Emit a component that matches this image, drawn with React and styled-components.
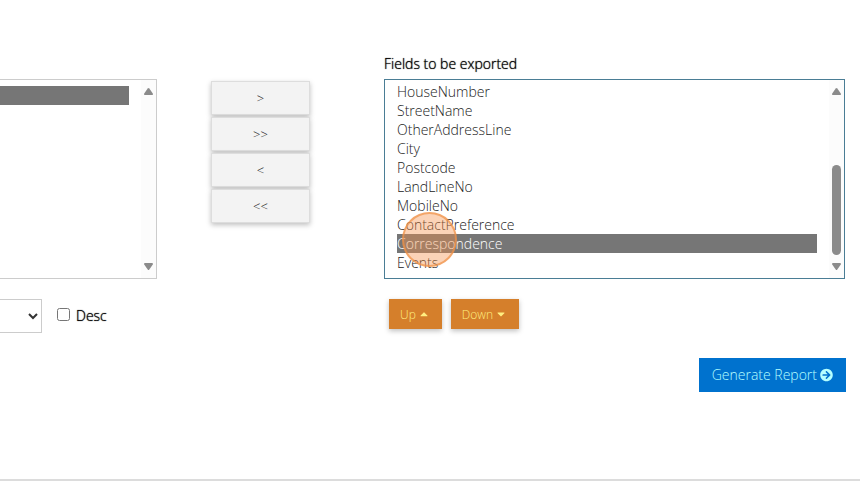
import React from 'react';
import styled, { createGlobalStyle } from "styled-components";
import { FaArrowCircleRight, FaCaretDown, FaCaretUp } from "react-icons/fa";

const GlobalStyle = createGlobalStyle`
* {
  box-sizing: border-box;
}

body {
  margin: 0;
  background: #fff;
  color: #555;
  font: 300 14px "Open Sans", "Noto Sans", sans-serif;
}

button, select, input {
  font: inherit;
}
`;

const Page = styled.main`
display: flex;
flex-direction: column;
padding-top: 54px;
border-bottom: 2px solid #dcdcdc;
`;

const Columns = styled.div`
display: grid;
grid-template-columns: 157fr 227fr 461fr;
padding-right: 15px;
`;

const Column = styled.div`
display: flex;
flex-direction: column;
min-width: 0;
`;

const Title = styled.label`
height: 25px;
line-height: 20px;
color: #000;
text-shadow: 0 0 1px #000;
`;

const ListFrame = styled.div`
position: relative;
display: flex;
height: 200px;
border: 1px solid ${({ $active }) => ($active ? "#4a7d95" : "#ccc")};
border-left-width: ${({ $active }) => ($active ? "1px" : "0")};
`;

const ListSelect = styled.select`
flex: 1;
min-width: 0;
padding: ${({ $scrolled }) => ($scrolled ? "2px 12px 6px" : "6px 12px 6px 0")};
border: 0;
outline: 0;
background: #fff;
color: #222;
overflow: hidden;
scrollbar-width: none;

option {
  min-height: 19px;
  padding: 0;
  font-weight: 300;
}

option:checked {
  background-image: linear-gradient(#767676, #767676);
  -webkit-text-fill-color: #fff;
}
`;

const Track = styled.div`
display: flex;
flex-direction: column;
align-items: center;
justify-content: space-between;
width: 15px;
padding: 8px 0;
background: #fcfcfc;
`;

const ScrollArrow = styled.svg`
display: block;
width: 9px;
height: 7px;
fill: #8b8b8b;
`;

const Thumb = styled.div`
width: 9px;
height: 90px;
margin: auto 0 8px;
border-radius: 5px;
background: #8b8b8b;
`;

const Transfer = styled.div`
display: flex;
flex-direction: column;
gap: 2px;
padding: 27px 0 0 54px;
`;

const TransferButton = styled.button`
width: 99px;
height: 34px;
border: 1px solid #ddd;
background: #f3f3f3;
color: #222;
font-size: 13px;
box-shadow: 0 2px 5px rgba(0, 0, 0, 0.25);
`;

const SortRow = styled.div`
display: flex;
align-items: center;
height: 34px;
margin-top: 20px;
white-space: nowrap;
`;

const SortSelect = styled.select`
width: 42px;
height: 34px;
border: 1px solid #ccc;
border-left: 0;
border-radius: 0;
background: #fff;
color: #333;
`;

const CheckLabel = styled.label`
display: flex;
align-items: center;
gap: 6px;
margin-left: 15px;
line-height: 18px;
color: #000;
text-shadow: 0 0 1px #000;

input {
  width: 13px;
  height: 13px;
  margin: 0 0 3px;
}
`;

const MoveRow = styled.div`
display: flex;
gap: 9px;
padding: 20px 5px 0;
`;

const MoveButton = styled.button`
display: flex;
align-items: center;
gap: 4px;
height: 30px;
padding: 0 14px 0 11px;
border: 0;
background: #d57f2b;
color: #ffee80;
font-size: 12px;
box-shadow: 0 2px 5px rgba(0, 0, 0, 0.25);

svg {
  width: 8px;
}
`;

const Footer = styled.div`
display: flex;
justify-content: flex-end;
padding: 25px 14px 87px;
`;

const GenerateButton = styled.button`
display: flex;
align-items: center;
gap: 3px;
height: 34px;
padding: 0 13px 1px;
border: 0;
background: #0072ce;
color: #b5ffff;

svg {
  width: 13px;
}
`;

const ClickMarker = styled.span`
position: absolute;
top: 132px;
left: 17px;
width: 55px;
height: 55px;
border: 2px solid rgba(240, 145, 70, 0.7);
border-radius: 50%;
background: rgba(245, 145, 75, 0.4);
pointer-events: none;
`;

const fields = [
    "HouseNumber",
    "StreetName",
    "OtherAddressLine",
    "City",
    "Postcode",
    "LandLineNo",
    "MobileNo",
    "ContactPreference",
    "Correspondence",
    "Events",
];

const transfers = [
    { text: ">", label: "Add selected" },
    { text: ">>", label: "Add all" },
    { text: "<", label: "Remove selected" },
    { text: "<<", label: "Remove all" },
];

function Scrollbar({ thumb }) {
    return (
        <Track aria-hidden="true">
            <ScrollArrow viewBox="0 0 9 7">
                <path d="M3.7.6Q4.5-.4 5.3.6L8.8 5.4Q9.3 7 8 7H1Q-.3 7 .2 5.4Z" />
            </ScrollArrow>
            {thumb && <Thumb />}
            <ScrollArrow viewBox="0 0 9 7">
                <path d="M3.7 6.4Q4.5 7.4 5.3 6.4L8.8 1.6Q9.3 0 8 0H1Q-.3 0 .2 1.6Z" />
            </ScrollArrow>
        </Track>
    );
}

function App() {
    return (
        <Page>
            <GlobalStyle />
            <Columns>
                <Column>
                    <Title as="div" />
                    <ListFrame>
                        <ListSelect multiple aria-label="Available fields" defaultValue={["first"]}>
                            <option value="first" aria-label="Field">&nbsp;</option>
                        </ListSelect>
                        <Scrollbar />
                    </ListFrame>
                    <SortRow>
                        <SortSelect aria-label="Sort by">
                            <option />
                        </SortSelect>
                        <CheckLabel>
                            <input type="checkbox" />
                            Desc
                        </CheckLabel>
                    </SortRow>
                </Column>

                <Transfer>
                    {transfers.map(({ text, label }) => (
                        <TransferButton key={text} type="button" aria-label={label}>{text}</TransferButton>
                    ))}
                </Transfer>

                <Column>
                    <Title htmlFor="exported">Fields to be exported</Title>
                    <ListFrame $active>
                        <ListSelect id="exported" multiple $scrolled defaultValue={["Correspondence"]}>
                            {fields.map(field => (
                                <option key={field} value={field}>{field}</option>
                            ))}
                        </ListSelect>
                        <Scrollbar thumb />
                        <ClickMarker />
                    </ListFrame>
                    <MoveRow>
                        <MoveButton type="button">Up <FaCaretUp /></MoveButton>
                        <MoveButton type="button">Down <FaCaretDown /></MoveButton>
                    </MoveRow>
                </Column>
            </Columns>

            <Footer>
                <GenerateButton type="button">Generate Report <FaArrowCircleRight /></GenerateButton>
            </Footer>
        </Page>
    );
}

export default App;
